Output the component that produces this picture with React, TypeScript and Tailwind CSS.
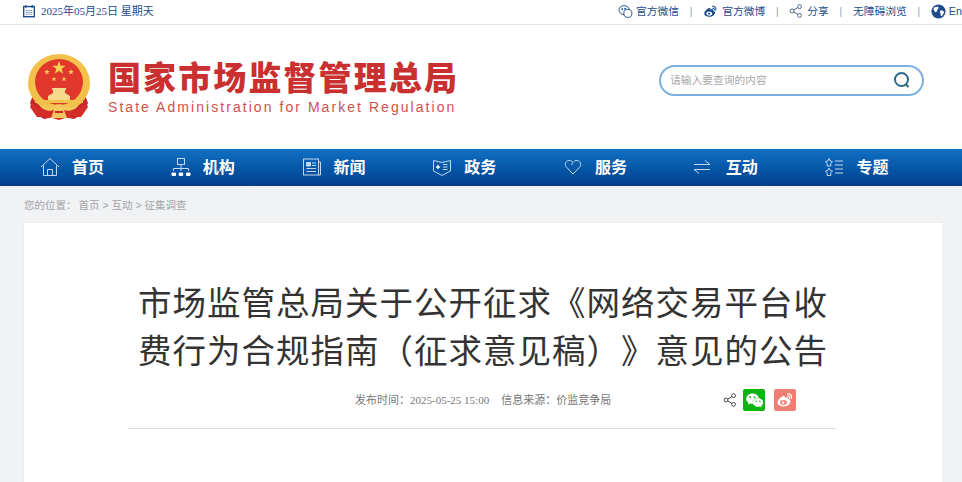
import React from 'react';

const SANS = 'font-["Liberation_Sans","Noto_Sans_CJK_SC",sans-serif]';

const ShareIcon = ({ className }: { className: string }) => (
  <svg viewBox="0 0 16 16" className={className} fill="none" stroke="currentColor" strokeWidth="1.1">
    <circle cx="3.5" cy="8" r="2.2" />
    <circle cx="12" cy="3" r="2.2" />
    <circle cx="12" cy="13" r="2.2" />
    <path d="M5.4 6.9 10.1 4.1M5.4 9.1l4.7 2.8" />
  </svg>
);

const WechatGlyph = ({ className }: { className: string }) => (
  <svg viewBox="0 0 24 24" className={className}>
    <path fill="#fff" d="M9.5 3C5 3 1.500 6 1.500 9.800c0 2.100 1.100 3.900 3 5.100l-.7 2.400 2.800-1.400c.9.300 1.900.4 2.900.4h.7c-.2-.6-.3-1.200-.3-1.800 0-3.400 3.200-6.100 7.100-6.100h.5C16.800 5.300 13.500 3 9.500 3z" />
    <path fill="#fff" d="M23 14.400c0-3-2.900-5.400-6.500-5.400S10 11.400 10 14.400s2.900 5.400 6.500 5.400c.8 0 1.500-.1 2.200-.3l2.300 1.300-.6-2c1.600-1.100 2.600-2.600 2.600-4.400z" />
    <circle cx="6.500" cy="7.800" r="1.100" fill="#0eb40e" />
    <circle cx="12" cy="7.800" r="1.100" fill="#0eb40e" />
    <circle cx="14.200" cy="13" r=".9" fill="#0eb40e" />
    <circle cx="18.800" cy="13" r=".9" fill="#0eb40e" />
  </svg>
);

const WeiboGlyph = ({ className, fill, eye }: { className: string; fill: string; eye: string }) => (
  <svg viewBox="0 0 24 24" className={className}>
    <path fill={fill} d="M10.500 20.500c-4.400 0-8.500-2.100-8.500-5.300 0-3.200 4.600-8 8-8.700 1.700-.3 2.300 1 1.900 2.600 2.400-1 5-.8 4.500 1.500 1.600.5 2.900 1.400 2.900 3 0 3.200-4 6.900-8.800 6.900z" />
    <ellipse cx="10" cy="15.300" rx="4.600" ry="3.300" fill={eye} />
    <circle cx="9.600" cy="15.500" r="1.700" fill={fill} />
    <path d="M15.500 3.800c3.200-.5 6 2.400 5 6M15.800 6.900c1.500-.3 2.700 1 2.300 2.500" fill="none" stroke={fill} strokeWidth="1.700" strokeLinecap="round" />
  </svg>
);

const TopLink = ({ icon, label, gap }: { icon?: React.ReactNode; label: string; gap: string }) => (
  <span className={`flex items-center ${gap}`}>
    {icon}
    <span>{label}</span>
  </span>
);

const Divider = () => <span className="text-[10px] text-[#8aa0bd]">|</span>;

const TopBar = () => (
  <div className={`flex h-[25px] items-center justify-between border-b border-[#e4e6ea] pb-[2px] pl-[23px] text-[#1c4c8c] ${SANS}`}>
    <div className="flex items-center gap-[6px] text-[11px]">
      <svg viewBox="0 0 13 14" className="h-[14px] w-[12px]" fill="none" stroke="#1c4c8c">
        <rect x="0.700" y="2.200" width="11.600" height="11" strokeWidth="1.500" />
        <path d="M3 0.500v3M10 0.500v3" strokeWidth="1.500" />
        <path d="M3 6.500h7M3 8.500h7M3 10.500h7" strokeWidth="1" strokeDasharray="1 1" />
      </svg>
      <span className='font-["Liberation_Serif","Noto_Sans_CJK_SC",serif]'>2025年05月25日 星期天</span>
    </div>
    <div className="flex w-[344px] items-center justify-between text-[10.750px]">
      <TopLink
        label="官方微信"
        gap="gap-[3px]"
        icon={
          <svg viewBox="0 0 16 16" className="h-[15px] w-[15px]" fill="none" stroke="#1c4c8c" strokeWidth="1">
            <ellipse cx="6.500" cy="6.500" rx="5.500" ry="4.800" />
            <circle cx="10.500" cy="10" r="4.300" fill="#fff" />
            <circle cx="4.500" cy="5.500" r="0.600" fill="#1c4c8c" />
            <circle cx="7.500" cy="5" r="0.600" fill="#1c4c8c" />
          </svg>
        }
      />
      <Divider />
      <TopLink label="官方微博" gap="gap-[4px]" icon={<WeiboGlyph className="h-[15px] w-[15px]" fill="#1c4c8c" eye="#fff" />} />
      <Divider />
      <TopLink label="分享" gap="gap-[4px]" icon={<ShareIcon className="h-[16px] w-[14px] text-[#4a6487]" />} />
      <Divider />
      <span>无障碍浏览</span>
      <Divider />
      <TopLink
        label="En"
        gap="gap-[3px]"
        icon={
          <svg viewBox="0 0 16 16" className="h-[15px] w-[15px]">
            <circle cx="8" cy="8" r="7.500" fill="#1c4c8c" />
            <path d="M3 4c2-1 4-1.500 5-.5.500 1.500-1 2-1.500 3.500S5 9.500 4 8 2.500 6 3 4zM10 7c1.500-.5 3.500 0 4 1.500-.5 2-1.500 3.500-3 4.500-1-1-.5-2.500-1-3.500S9 8 10 7z" fill="#fff" />
          </svg>
        }
      />
    </div>
  </div>
);

// five pointed star, returned as polygon points
const star = (cx: number, cy: number, r: number) =>
  Array.from({ length: 10 }, (_, i) => {
    const rad = i % 2 === 0 ? r : r * 0.4;
    const a = (Math.PI / 5) * i - Math.PI / 2;
    return `${(cx + rad * Math.cos(a)).toFixed(2)},${(cy + rad * Math.sin(a)).toFixed(2)}`;
  }).join(' ');

const Emblem = () => (
  <svg viewBox="0 0 64 68" className="h-[68px] w-[64px] shrink-0">
    <path d="M6 42 3 50l5 11 9 5 15-3 15 3 9-5 5-11-3-8z" fill="#c9262a" />
    <ellipse cx="32" cy="30" rx="31" ry="29" fill="#f2c14a" />
    <ellipse cx="32" cy="29" rx="24" ry="23" fill="#e2372c" />
    <polygon points={star(32, 15, 7)} fill="#f7d254" />
    <polygon points={star(20, 19, 3)} fill="#f7d254" />
    <polygon points={star(44, 19, 3)} fill="#f7d254" />
    <polygon points={star(27, 26, 2.7)} fill="#f7d254" />
    <polygon points={star(37, 26, 2.7)} fill="#f7d254" />
    <path d="M25 35h14v2h-1v3l5 3v4H21v-4l5-3v-3h-1z" fill="#f6d98a" />
    <path d="M8 47h48v3H8z" fill="#f2c14a" />
    <path d="M5 49c6 9 15 11 23 6h8c8 5 17 3 23-6l2 5-7 10-12 0-10 3-10-3-12 0-7-10z" fill="#d42d27" />
    <path d="M12 51c5 4 11 4 16 1 2-1 6-1 8 0 5 3 11 3 16-1-2 6-10 8-15 6l3 8h-16l3-8c-5 2-13 0-15-6z" fill="#f3c75c" />
    <path d="M28 58h8v2h-8z" fill="#c9262a" />
  </svg>
);

const Header = () => (
  <div className="flex h-[124px] items-center justify-between pl-[27px] pr-[38px]">
    <div className="flex items-center gap-[17px]">
      <Emblem />
      <div className={`text-[#c9302f] ${SANS}`}>
        <div className="pt-[1px] text-[33px] leading-[39px] font-black tracking-[2.100px]">国家市场监督管理总局</div>
        <div className="text-[14px] leading-[18px] tracking-[2.050px] opacity-85">State Administration for Market Regulation</div>
      </div>
    </div>
    <div className="mb-[14px] flex h-[31px] w-[265px] items-center justify-between rounded-full border-2 border-[#7db0dd] pl-[9px] pr-[11px]">
      <span className={`text-[10.750px] text-[#a8a8a8] ${SANS}`}>请输入要查询的内容</span>
      <svg viewBox="0 0 18 18" className="h-[18px] w-[18px]" fill="none" stroke="#2c6a8c">
        <circle cx="8.500" cy="8.500" r="6.500" strokeWidth="2" />
        <path d="M12.500 13 15.500 16" strokeWidth="2.200" />
      </svg>
    </div>
  </div>
);

const navIcon = 'h-[20px] w-[20px]';
const navItems: { label: string; icon: React.ReactNode }[] = [
  {
    label: '首页',
    icon: (
      <svg viewBox="0 0 20 20" className={navIcon} fill="none" stroke="currentColor" strokeWidth="1">
        <path d="M1 10 10 1.500 19 10M3.500 8.500V18.500h13V8.500" />
        <path d="M7.500 18.500v-6h5v6" />
      </svg>
    ),
  },
  {
    label: '机构',
    icon: (
      <svg viewBox="0 0 20 20" className={navIcon} fill="none" stroke="currentColor" strokeWidth="1">
        <rect x="6.500" y="1.500" width="7" height="6" />
        <path d="M10 7.500v4M2.500 14v-2.500h15V14M10 11.500V14" />
        <path d="M1 16h3.500v2.500H1zM8.200 16h3.500v2.500H8.200zM15.500 16H19v2.500h-3.500z" fill="#fff" stroke="#fff" />
      </svg>
    ),
  },
  {
    label: '新闻',
    icon: (
      <svg viewBox="0 0 20 20" className={navIcon} fill="none" stroke="currentColor" strokeWidth="1">
        <rect x="1.500" y="2" width="15" height="16" />
        <path d="M16.500 5h2v13h-2" />
        <path d="M4.500 5.500h4v3.500h-4z" fill="currentColor" />
        <path d="M10 6h4M10 8.500h4M4.500 11.500h9.500M4.500 14.500h9.500" />
      </svg>
    ),
  },
  {
    label: '政务',
    icon: (
      <svg viewBox="0 0 20 20" className={navIcon} fill="none" stroke="currentColor" strokeWidth="1">
        <path d="M1.500 3.500 10 5.500l8.500-2V14L10 18.500 1.500 14z" />
        <circle cx="6" cy="10" r="1.300" fill="#fff" stroke="#fff" />
        <path d="M11 7.500h4.500M11 10h4.500M11 12.500h4.500" />
      </svg>
    ),
  },
  {
    label: '服务',
    icon: (
      <svg viewBox="0 0 20 20" className={navIcon} fill="none" stroke="currentColor" strokeWidth="1">
        <path d="M10 17 3.500 10.200C1.700 8.200 2 5.300 4.200 4c2.200-1.100 4.400-.4 5.800 1.300L8.500 8" />
        <path d="M10 17l6.500-6.800c1.800-2 1.500-4.900-.8-6.200-1.800-.9-3.600-.6-4.800.5" />
      </svg>
    ),
  },
  {
    label: '互动',
    icon: (
      <svg viewBox="0 0 20 20" className={`${navIcon} -ml-[2px]`} fill="none" stroke="currentColor" strokeWidth="1">
        <path d="M2 7.500h16L13 3.500M18 12.500H2L7 16.500" />
      </svg>
    ),
  },
  {
    label: '专题',
    icon: (
      <svg viewBox="0 0 20 20" className={`${navIcon} -ml-[1px]`} fill="none" stroke="currentColor" strokeWidth="1">
        <path d="M5 1.500 6.200 4 8.500 4.500 6.800 6.300V9H3.200V6.300L1.500 4.500 3.800 4zM5 11l1.200 2.500 2.300.5-1.700 1.800V18.500H3.200V15.800L1.500 14l2.300-.5z" />
        <path d="M11 4h8M11 8h8M11 12h8M11 16h8" />
      </svg>
    ),
  },
];

const Nav = () => (
  <nav className={`flex h-[37px] items-center border-b border-[#043a82] bg-gradient-to-b from-[#1170c4] to-[#03418f] pl-[40px] ${SANS}`}>
    {navItems.map(item => (
      <div key={item.label} className="flex w-[130.750px] items-center">
        <span className="flex w-[32px] text-[#c3d8ee]">{item.icon}</span>
        <span className="pt-[2px] text-[16px] font-bold text-white">{item.label}</span>
      </div>
    ))}
  </nav>
);

const Article = () => (
  <div className="ml-[23px] h-[280px] w-[920px] border border-[#eceef0] bg-white">
    <h1 className={`ml-[114px] mt-[57px] w-[692px] text-[33.500px] leading-[48px] tracking-[1px] text-[#333] [text-spacing-trim:space-all] ${SANS}`}>
      市场监管总局关于公开征求《网络交易平台收费行为合规指南（征求意见稿）》意见的公告
    </h1>
    <div className="ml-[104px] mt-[13px] flex w-[708px] items-center border-b border-[#dedede] pb-[17px] pl-[227px] text-[11px] text-[#777]">
      <span className='pt-[1px] font-["Liberation_Serif","Noto_Sans_CJK_SC",serif]'>发布时间：2025-05-25 15:00</span>
      <span className={`ml-[12px] pt-[1px] ${SANS}`}>信息来源：价监竞争局</span>
      <div className="ml-auto mr-[40px] flex items-center gap-[6px]">
        <ShareIcon className="h-[16px] w-[14px] text-[#444]" />
        <span className="flex h-[22px] w-[22px] items-center justify-center rounded-[2px] bg-[#0eb40e]">
          <WechatGlyph className="h-[19px] w-[19px]" />
        </span>
        <span className="ml-[3px] flex h-[22px] w-[22px] items-center justify-center rounded-[2px] bg-[#ef7f72]">
          <WeiboGlyph className="h-[18px] w-[18px]" fill="#fff" eye="#ef7f72" />
        </span>
      </div>
    </div>
  </div>
);

export default function App() {
  return (
    <div className="h-[482px] overflow-hidden bg-white">
      <TopBar />
      <Header />
      <Nav />
      <div className="h-[296px] bg-[#f1f2f4]">
        <div className={`flex h-[36px] items-center gap-[2px] pl-[24px] pt-[3px] text-[10.500px] text-[#a2a4a8] ${SANS}`}>
          <span>您的位置：</span>
          <span>首页 &gt; 互动 &gt; 征集调查</span>
        </div>
        <Article />
      </div>
    </div>
  );
}
